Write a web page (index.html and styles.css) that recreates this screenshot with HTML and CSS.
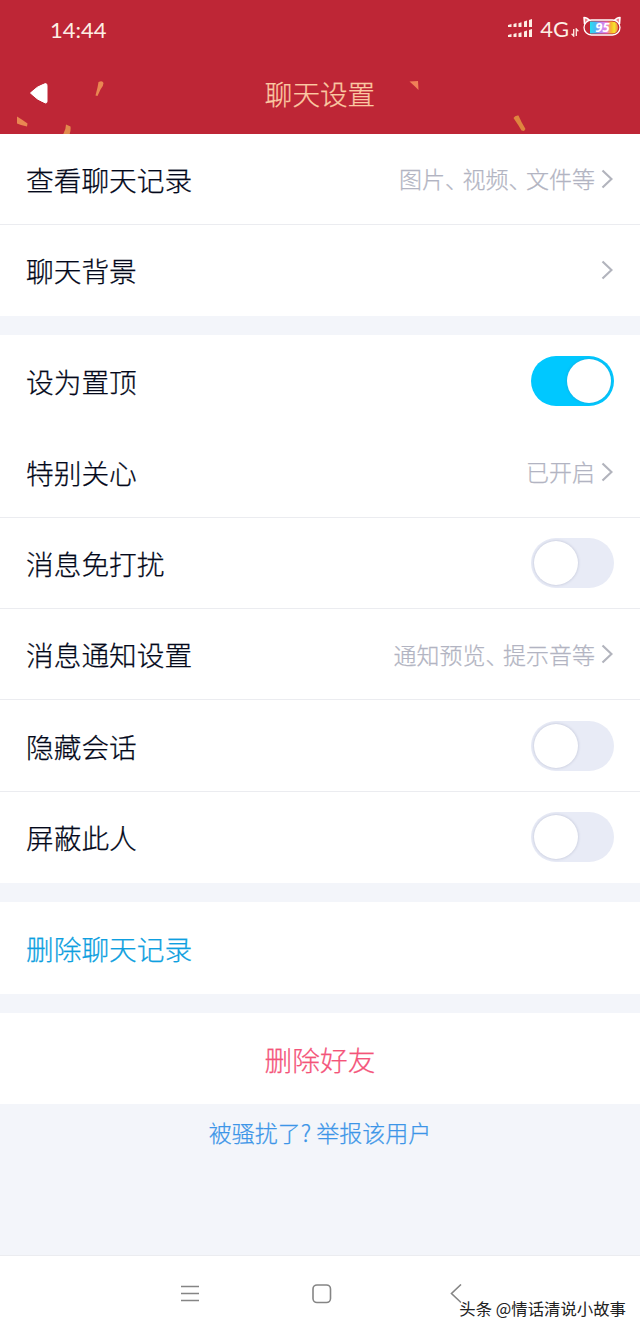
FILE: index.html
```html
<!DOCTYPE html>
<html lang="zh-CN">
<head>
    <meta charset="UTF-8">
    <meta name="viewport" content="width=device-width, initial-scale=1.0">
    <title>聊天设置</title>
    <link rel="stylesheet" href="styles.css">
</head>
<body>
    <div class="header">
        <!-- 节日彩带 -->
        <svg class="confetti" width="640" height="134" viewBox="0 0 640 134">
            <path d="M98.500 82q4-2 5 1 0 3-3 6.500L97.500 96l-2-.5 2-8z" fill="#e98752"/>
            <path d="M17 116.500l5.500 3.500 5 3.500-.5 3-6-1.500-4-1.500z" fill="#e98752"/>
            <path d="M66 124.500l4.500 2q.5 4-1 8h-6.500q3-5 3-10z" fill="#e18a4d"/>
            <path d="M409.500 81.500l8.500-.5.500 9-3-3z" fill="#f08058"/>
            <path d="M513.500 118q1.500-3 5-2.500l3 6.500 4 7-1.500 2-2.500-.5-3-5z" fill="#df853f"/>
        </svg>

        <!-- 状态栏 -->
        <div class="status">
            <span class="time">14:44</span>
            <svg class="signal" width="26" height="20" viewBox="0 0 26 20">
                <g fill="#fdeee4">
                    <path d="M1 6l3.500-1v3H1zM6.500 5l3-1v4h-3zM11.500 4.200l3-1V8h-3zM17 2.500l3-1V8h-3zM22 1l3-1v8h-3z"/>
                    <path d="M1 16l3.500-1v3H1zM6.500 15l3-1v4h-3zM11.500 14.200l3-1V18h-3zM17 12.500l3-1V18h-3zM22 11l3-1v8h-3z"/>
                </g>
            </svg>
            <span class="net">4G</span>
            <svg class="updown" width="8" height="9" viewBox="0 0 8 9">
                <path d="M2.700 1v7L.6 5.800M5.300 8V1l2.100 2.200" fill="none" stroke="#fdeee4" stroke-width="1.300"/>
            </svg>
            <svg class="battery" width="40" height="22" viewBox="0 0 40 22">
                <defs>
                    <linearGradient id="rainbow">
                        <stop offset="0" stop-color="#28e0ee"/>
                        <stop offset=".18" stop-color="#45bdf5"/>
                        <stop offset=".38" stop-color="#b48bf5"/>
                        <stop offset=".6" stop-color="#ef84e0"/>
                        <stop offset=".75" stop-color="#f8b52c"/>
                        <stop offset=".87" stop-color="#f4e52d"/>
                        <stop offset="1" stop-color="#f28a45"/>
                    </linearGradient>
                </defs>
                <path d="M2.500 8L2 1.500q3.500 0 6 3.500M37.500 8l.5-6.500q-3.500 0-6 3.500" fill="#ef8792" stroke="#fff" stroke-width="1.500" stroke-linejoin="round"/>
                <rect x="2" y="4" width="36" height="15" rx="7.500" fill="#c02636" stroke="#fff" stroke-width="1.300"/>
                <path d="M8 5.500h22q6 0 6 6t-6 6H8z" fill="url(#rainbow)"/>
                <text x="20.500" y="16" class="level">95</text>
            </svg>
        </div>

        <!-- 标题栏 -->
        <div class="title-bar">
            <svg class="back" width="22" height="24" viewBox="0 0 22 24">
                <path d="M2.500 12Q9 5 17.500 2.500q1.500 0 1.500 2v16q0 1.500-1.500 1.500Q9 19 2.500 12z" fill="#fff" stroke="#fff" stroke-width="1" stroke-linejoin="round"/>
            </svg>
            <h1>聊天设置</h1>
        </div>
    </div>

    <div class="group">
        <div class="row line first">
            <span class="name">查看聊天记录</span>
            <span class="value">图片<i>、</i>视频<i>、</i>文件等</span>
            <svg class="arrow" width="12" height="20" viewBox="0 0 12 20"><path d="M1.500 1.500l9 8.500-9 8.500"/></svg>
        </div>
        <div class="row">
            <span class="name">聊天背景</span>
            <svg class="arrow" width="12" height="20" viewBox="0 0 12 20"><path d="M1.500 1.500l9 8.500-9 8.500"/></svg>
        </div>
    </div>

    <div class="group">
        <div class="row">
            <span class="name">设为置顶</span>
            <span class="switch on"></span>
        </div>
        <div class="row line">
            <span class="name">特别关心</span>
            <span class="value">已开启</span>
            <svg class="arrow" width="12" height="20" viewBox="0 0 12 20"><path d="M1.500 1.500l9 8.500-9 8.500"/></svg>
        </div>
        <div class="row line">
            <span class="name">消息免打扰</span>
            <span class="switch"></span>
        </div>
        <div class="row line">
            <span class="name">消息通知设置</span>
            <span class="value">通知预览<i>、</i>提示音等</span>
            <svg class="arrow" width="12" height="20" viewBox="0 0 12 20"><path d="M1.500 1.500l9 8.500-9 8.500"/></svg>
        </div>
        <div class="row line">
            <span class="name">隐藏会话</span>
            <span class="switch"></span>
        </div>
        <div class="row">
            <span class="name">屏蔽此人</span>
            <span class="switch"></span>
        </div>
    </div>

    <div class="group">
        <div class="row clear">
            <span class="name">删除聊天记录</span>
        </div>
    </div>

    <div class="group last">
        <div class="row delete">删除好友</div>
    </div>

    <p class="report">被骚扰了? 举报该用户</p>

    <!-- 底部导航键 -->
    <div class="nav">
        <svg width="20" height="20" viewBox="0 0 20 20"><path d="M1 2.500h18M1 9.500h18M1 16.500h18"/></svg>
        <svg width="20" height="20" viewBox="0 0 20 20"><rect x="1" y="1" width="17.500" height="17.500" rx="4"/></svg>
        <svg width="20" height="20" viewBox="0 0 20 20"><path d="M17 .5L7.500 9.500l9.500 9"/></svg>
        <span class="watermark">头条 @情话清说小故事</span>
    </div>
</body>
</html>
```
FILE: styles.css
```css
*{
    margin: 0;
    padding: 0;
    box-sizing: border-box;
}
body{
    display: flex;
    flex-direction: column;
    width: 640px;
    height: 1332px;
    background: #f3f5fa;
    font-family: "Noto Sans CJK SC", sans-serif;
    font-weight: 300;
    color: #03081a;
    -webkit-text-stroke: .25px;
    overflow: hidden;
}
i{
    font-style: normal;
}
.header{
    position: relative;
    height: 134px;
    background: #be2636;
}
.confetti{
    position: absolute;
    left: 0;
    top: 0;
}
.status{
    display: flex;
    height: 56px;
    padding: 0 18px 0 50px;
    align-items: center;
    color: #fdeee4;
    font-family: Lato, sans-serif;
    font-weight: 400;
    -webkit-text-stroke: 0;
}
.time{
    margin-top: 2px;
    font-size: 22px;
}
.signal{
    margin-top: 2px;
    margin-left: auto;
}
.net{
    margin: 1px 1px 0 7px;
    font-size: 22px;
}
.updown{
    margin: 8px 3px 0 1px;
}
.battery{
    margin-bottom: 3px;
}
.level{
    font: bold italic 13px "Open Sans", sans-serif;
    fill: #fff;
    text-anchor: middle;
}
.title-bar{
    display: grid;
    grid-template-columns: 80px 1fr 80px;
    height: 78px;
    align-items: center;
}
.back{
    margin-left: 28px;
    margin-bottom: 4px;
}
.title-bar h1{
    margin-bottom: 4px;
    color: #fbc9a3;
    font-size: 27.6px;
    font-weight: 300;
    text-align: center;
}
.group{
    margin-bottom: 19.3px;
    background: #fff;
}
.row{
    display: flex;
    height: 91.3px;
    padding: 0 26px;
    align-items: center;
    font-size: 27.7px;
}
.first{
    height: 90.7px;
}
.line{
    border-bottom: 1px solid #ebecf0;
}
.name{
    flex: 1;
}
.value{
    margin-right: 6px;
    margin-bottom: 1px;
    color: #b2b4c2;
    font-size: 23px;
}
.value i{
    letter-spacing: -5.5px;
}
.arrow{
    margin-right: 1px;
    fill: none;
    stroke: #b2b4bd;
    stroke-width: 2.2;
}
.switch{
    width: 83px;
    height: 50px;
    padding: 3px;
    border-radius: 25px;
    background: #e8ebf6;
}
.switch::before{
    content: "";
    display: block;
    width: 44px;
    height: 44px;
    border-radius: 50%;
    background: #fff;
    box-shadow: 0 0 3px rgba(80, 90, 130, .3);
}
.on{
    background: #00c8ff;
}
.on::before{
    margin-left: 33px;
}
.clear{
    color: #0e9fe0;
}
.delete{
    justify-content: center;
    color: #f4547a;
}
.last{
    margin-bottom: 0;
}
.report{
    margin-top: 11px;
    color: #3c95e8;
    font-size: 23px;
    line-height: 34px;
    text-align: center;
}
.nav{
    position: relative;
    display: flex;
    height: 77px;
    margin-top: auto;
    padding-left: 180px;
    gap: 112px;
    align-items: center;
    background: #fff;
    border-top: 1px solid #ebecf0;
}
.nav svg{
    fill: none;
    stroke: #858585;
    stroke-width: 1.6;
}
.watermark{
    position: absolute;
    right: 14px;
    bottom: 12px;
    color: #222;
    font-size: 16.4px;
    font-weight: 400;
    line-height: 24px;
    text-shadow: -1px -1px 0 #fff;
    -webkit-text-stroke: 0;
}
```
